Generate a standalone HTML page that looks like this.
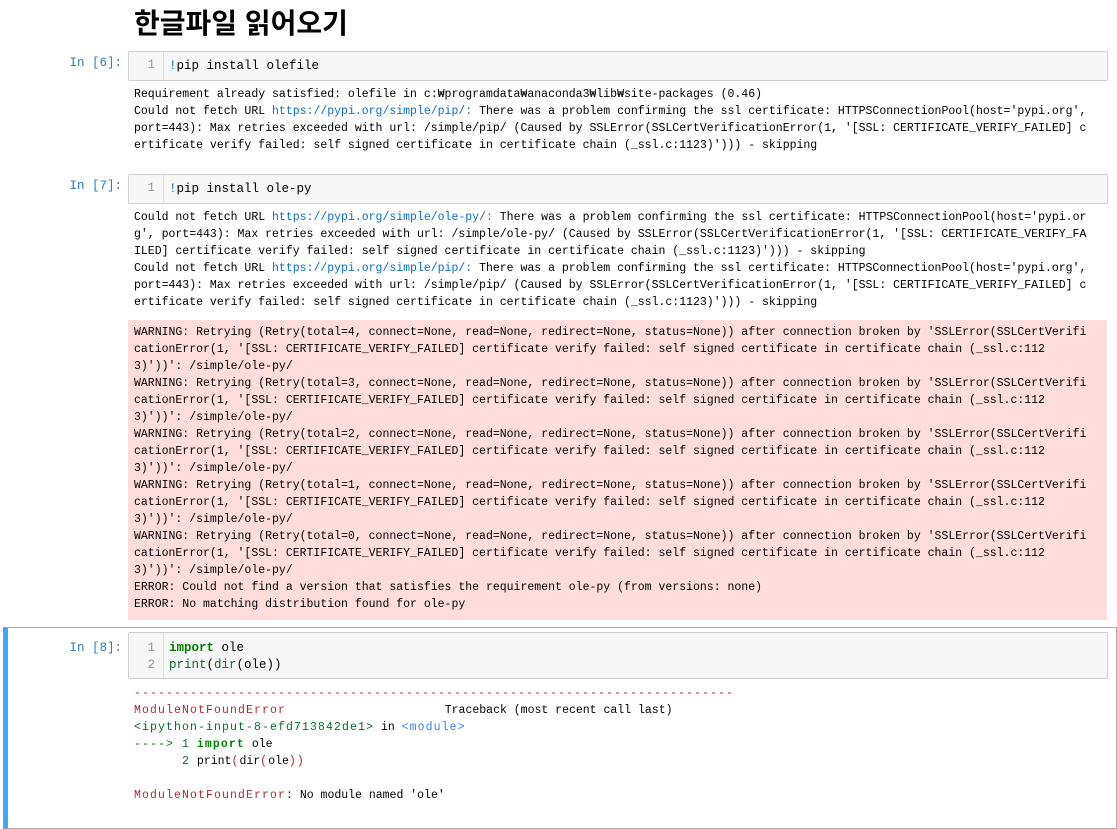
<!DOCTYPE html>
<html><head><meta charset="utf-8"><style>
body{margin:0;width:1117px;height:819px;background:#fff;overflow:hidden;position:relative;font-family:"Liberation Mono","Noto Sans CJK KR",monospace;}
.a{position:absolute;}
h1{position:absolute;left:134px;top:2px;margin:0;font:bold 28px "Liberation Sans","Noto Sans CJK KR",sans-serif;color:#000;}
.p{position:absolute;width:122px;left:0;text-align:right;color:#2f7cbf;font-size:12.5px;}
.box{position:absolute;left:128px;width:978px;background:#f7f7f7;border:1px solid #cfcfcf;border-radius:2px;}
.gut{position:absolute;left:0;top:0;bottom:0;width:34px;border-right:1px solid #ddd;background:#f7f7f7;color:#999;font-size:12.5px;text-align:right;}
pre{margin:0;font:11.5px/17px "Liberation Mono","Noto Sans CJK KR",monospace;color:#000;white-space:pre;}
.code{font-size:12.5px;line-height:16.5px;}
.l{color:#0b70c7}
.w{display:inline-block;width:6.9px;overflow:hidden;vertical-align:top}
.err{position:absolute;left:128px;width:979px;top:320px;height:300px;background:#fdd;}
.r{color:#b22b31}
.g{color:#007427}
.k{color:#008000;font-weight:bold}
.b{color:#3385f0}
.tb .r,.tb .g,.tb .b,.tb .k{letter-spacing:1.1px}
</style></head><body>
<h1>한글파일 읽어오기</h1>

<div class="p" style="top:56px">In [6]:</div>
<div class="box" style="top:51px;height:28px"><div class="gut"><span style="position:absolute;right:8px;top:6px">1</span></div>
<pre class="code a" style="left:40px;top:6px"><span class="l">!</span>pip install olefile</pre></div>
<pre class="a" style="left:134px;top:86px">Requirement already satisfied: olefile in c:<span class="w">₩</span>programdata<span class="w">₩</span>anaconda3<span class="w">₩</span>lib<span class="w">₩</span>site-packages (0.46)
Could not fetch URL <span class="l">https://pypi.org/simple/pip/:</span> There was a problem confirming the ssl certificate: HTTPSConnectionPool(host='pypi.org',
port=443): Max retries exceeded with url: /simple/pip/ (Caused by SSLError(SSLCertVerificationError(1, '[SSL: CERTIFICATE_VERIFY_FAILED] c
ertificate verify failed: self signed certificate in certificate chain (_ssl.c:1123)'))) - skipping</pre>

<div class="p" style="top:179px">In [7]:</div>
<div class="box" style="top:174px;height:28px"><div class="gut"><span style="position:absolute;right:8px;top:6px">1</span></div>
<pre class="code a" style="left:40px;top:6px"><span class="l">!</span>pip install ole-py</pre></div>
<pre class="a" style="left:134px;top:209px">Could not fetch URL <span class="l">https://pypi.org/simple/ole-py/:</span> There was a problem confirming the ssl certificate: HTTPSConnectionPool(host='pypi.or
g', port=443): Max retries exceeded with url: /simple/ole-py/ (Caused by SSLError(SSLCertVerificationError(1, '[SSL: CERTIFICATE_VERIFY_FA
ILED] certificate verify failed: self signed certificate in certificate chain (_ssl.c:1123)'))) - skipping
Could not fetch URL <span class="l">https://pypi.org/simple/pip/:</span> There was a problem confirming the ssl certificate: HTTPSConnectionPool(host='pypi.org',
port=443): Max retries exceeded with url: /simple/pip/ (Caused by SSLError(SSLCertVerificationError(1, '[SSL: CERTIFICATE_VERIFY_FAILED] c
ertificate verify failed: self signed certificate in certificate chain (_ssl.c:1123)'))) - skipping</pre>
<div class="err"></div>
<pre class="a" style="left:134px;top:324px">WARNING: Retrying (Retry(total=4, connect=None, read=None, redirect=None, status=None)) after connection broken by 'SSLError(SSLCertVerifi
cationError(1, '[SSL: CERTIFICATE_VERIFY_FAILED] certificate verify failed: self signed certificate in certificate chain (_ssl.c:112
3)'))': /simple/ole-py/
WARNING: Retrying (Retry(total=3, connect=None, read=None, redirect=None, status=None)) after connection broken by 'SSLError(SSLCertVerifi
cationError(1, '[SSL: CERTIFICATE_VERIFY_FAILED] certificate verify failed: self signed certificate in certificate chain (_ssl.c:112
3)'))': /simple/ole-py/
WARNING: Retrying (Retry(total=2, connect=None, read=None, redirect=None, status=None)) after connection broken by 'SSLError(SSLCertVerifi
cationError(1, '[SSL: CERTIFICATE_VERIFY_FAILED] certificate verify failed: self signed certificate in certificate chain (_ssl.c:112
3)'))': /simple/ole-py/
WARNING: Retrying (Retry(total=1, connect=None, read=None, redirect=None, status=None)) after connection broken by 'SSLError(SSLCertVerifi
cationError(1, '[SSL: CERTIFICATE_VERIFY_FAILED] certificate verify failed: self signed certificate in certificate chain (_ssl.c:112
3)'))': /simple/ole-py/
WARNING: Retrying (Retry(total=0, connect=None, read=None, redirect=None, status=None)) after connection broken by 'SSLError(SSLCertVerifi
cationError(1, '[SSL: CERTIFICATE_VERIFY_FAILED] certificate verify failed: self signed certificate in certificate chain (_ssl.c:112
3)'))': /simple/ole-py/
ERROR: Could not find a version that satisfies the requirement ole-py (from versions: none)
ERROR: No matching distribution found for ole-py</pre>

<div class="a" style="left:3px;top:627px;width:1108px;height:200px;border:1px solid #ababab;border-left:5px solid #42a5f5;"></div>
<div class="p" style="top:641px">In [8]:</div>
<div class="box" style="top:632px;height:45px"><div class="gut"><span style="position:absolute;right:8px;top:7px;line-height:16.5px">1<br>2</span></div>
<pre class="code a" style="left:40px;top:7px"><span class="k">import</span> ole
<span class="g">print</span>(<span class="g">dir</span>(ole))</pre></div>
<pre class="a tb" style="left:134px;top:685px"><span class="r">---------------------------------------------------------------------------</span>
<span class="r">ModuleNotFoundError</span>                       Traceback (most recent call last)
<span class="g">&lt;ipython-input-8-efd713842de1&gt;</span> in <span class="b">&lt;module&gt;</span>
<span class="g">----&gt; 1</span> <span class="k">import</span> ole
<span class="g">      2</span> print<span class="r">(</span>dir<span class="r">(</span>ole<span class="r">))</span>

<span class="r">ModuleNotFoundError</span>: No module named 'ole'</pre>
</body></html>
